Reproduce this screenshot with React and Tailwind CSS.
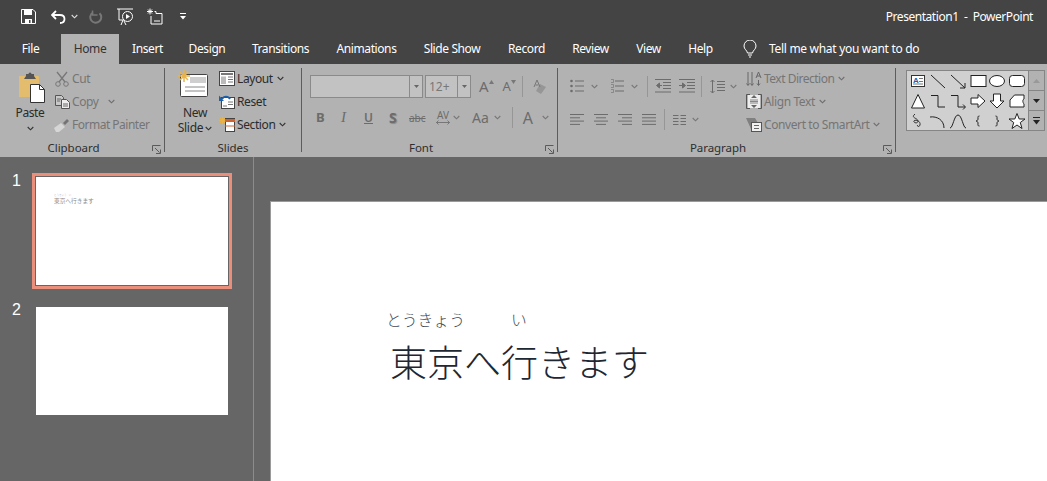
import React from "react";

const Chev = ({ c = "#444", className = "" }) => (
  <svg width="7" height="5" viewBox="0 0 7 5" className={className}>
    <path d="M.7 1 3.500 3.800 6.300 1" fill="none" stroke={c} strokeWidth="1.100" />
  </svg>
);

const Launcher = () => (
  <svg width="9" height="9" viewBox="0 0 9 9" className="absolute right-[3px] top-[5px]">
    <path d="M.5 6V.5h8" fill="none" stroke="#5a5a5a" />
    <path d="M3 3l4.500 4.500M4 8.500h4.500V4.500" fill="none" stroke="#5a5a5a" />
  </svg>
);

const Group = ({ width, label, children, launcher = true }) => (
  <>
    <div className={`flex flex-col ${width}`}>
      <div className="flex h-[76px]">{children}</div>
      <div className={`relative h-[16px] text-center text-[11.5px] leading-[16px] tracking-[-0.05px] text-[#2e2e2e] ${launcher ? "pr-[17px]" : ""}`}>
        {label}
        {launcher && <Launcher />}
      </div>
    </div>
    <div className="mt-[4px] h-[84px] w-px bg-[#5c5c5c]" />
  </>
);

const SmallRow = ({ icon, text, gray, chev, chevClass = "ml-[4px]", track = "tracking-[-0.4px]" }) => (
  <div className="flex h-[23px] items-center">
    <span className="flex w-[18px] justify-center">{icon}</span>
    <span className={`ml-[1px] text-[12px] ${track} ${gray ? "text-[#757575]" : "text-[#2b2b2b]"}`}>{text}</span>
    {chev && <Chev c={gray ? "#6e6e6e" : "#333"} className={chevClass} />}
  </div>
);

const Lines = ({ rows = [0, 1, 2, 3], w = 14, d = "left" }) => (
  <svg width="14" height="13" viewBox="0 0 14 13">
    {rows.map((i) => {
      const short = i % 2 === 1 ? 4 : 0;
      const x1 = d === "left" ? 0 : d === "center" ? short / 2 : d === "right" ? short : 0;
      const x2 = d === "left" ? w - short : d === "center" ? w - short / 2 : w;
      return <path key={i} d={`M${x1} ${1.5 + i * 3.3}H${d === "just" ? w : x2}`} stroke="#6c6c6c" />;
    })}
  </svg>
);

const Bullets = ({ num }) => (
  <svg width="14" height="14" viewBox="0 0 14 14">
    {[2, 7, 12].map((y) => (
      <g key={y}>
        {num ? <path d={`M1 ${y - 1.5}h2.500v3h-2.500`} fill="none" stroke="#777" strokeWidth=".7" /> : <circle cx="1.500" cy={y} r="1.300" fill="#6c6c6c" />}
        <path d={`M5 ${y}h9`} stroke="#6c6c6c" />
      </g>
    ))}
  </svg>
);

const Indent = ({ inc }) => (
  <svg width="16" height="14" viewBox="0 0 16 14">
    <path d="M0 .5h16M8 3.500h8M8 6.500h8M8 9.500h8M0 13h16" stroke="#6c6c6c" />
    {inc ? <path d="M0 6.500h5M3.500 4l3 2.500-3 2.500z" stroke="#6c6c6c" fill="#6c6c6c" /> : <path d="M2 6.500h5M4.500 4l-3 2.500 3 2.500z" stroke="#6c6c6c" fill="#6c6c6c" />}
  </svg>
);

const Sep = ({ className = "h-[21px]" }) => <div className={`w-px bg-[#969696] ${className}`} />;

const shapes = [
  <g key="a"><rect x="3.500" y="4.500" width="13" height="11" fill="#fff" stroke="#333" /><text x="5" y="11.500" fontSize="8" fontWeight="700" fill="#1f5fa8" fontFamily="Liberation Sans">A</text><path d="M11 7.500h4M11 10.500h4M5 13h10" stroke="#777" /></g>,
  <path key="b" d="M3 4 17 17" stroke="#222" fill="none" />,
  <path key="c" d="M3 4 17 17M17 12v5h-5" stroke="#222" fill="none" />,
  <rect key="d" x="3" y="4.500" width="15" height="11" fill="#fff" stroke="#222" />,
  <ellipse key="e" cx="10" cy="10" rx="7.500" ry="5.500" fill="#fff" stroke="#222" />,
  <rect key="f" x="2.500" y="4.500" width="15" height="11" rx="3" fill="#fff" stroke="#222" />,
  <path key="g" d="M10 3.500 16.500 17h-13z" fill="#fff" stroke="#222" />,
  <path key="h" d="M3 4.500h7V16h7" stroke="#222" fill="none" />,
  <path key="i" d="M3 4.500h7V16h7M15 13.500l2.500 2.500-2.500 2.500" stroke="#222" fill="none" />,
  <path key="j" d="M3 7h7V3.500l7 6.500-7 6.500V13H3z" fill="#fff" stroke="#222" />,
  <path key="k" d="M6.500 3h7v7H17l-7 7-7-7h3.500z" fill="#fff" stroke="#222" />,
  <path key="l" d="M3 9 7.500 4H17v4c-2 1-1 4 0 5v3H3z" fill="#fff" stroke="#222" />,
  <path key="m" d="M7 3C2 7 10 7 10 10c0 3-5 2-4 0 1-2 7 0 6 4-.5 2-3 2-2.500 0" stroke="#333" fill="none" />,
  <path key="n" d="M2 6c7-1 14 3 14 11" stroke="#222" fill="none" />,
  <path key="o" d="M2 17C5 17 6 4 10 4s5 13 8 13" stroke="#222" fill="none" />,
  <path key="p" d="M11.500 5c-2 0-1.500 1-1.500 3 0 1-1 2-2 2 1 0 2 1 2 2 0 2-.5 3 1.500 3" stroke="#222" fill="none" />,
  <path key="q" d="M8.500 5c2 0 1.500 1 1.500 3 0 1 1 2 2 2-1 0-2 1-2 2 0 2 .5 3-1.500 3" stroke="#222" fill="none" />,
  <path key="r" d="M10 2.500 12.200 8H18l-4.700 3.500L15 17.500 10 14l-5 3.500 1.700-6L2 8h5.800z" fill="#fff" stroke="#222" />,
];

const tabs = [
  ["File", "w-[61px]"],
  ["Home", "w-[58px]"],
  ["Insert", "w-[57px]"],
  ["Design", "w-[62px]"],
  ["Transitions", "w-[85px]"],
  ["Animations", "w-[87px]"],
  ["Slide Show", "w-[84px]"],
  ["Record", "w-[65px]"],
  ["Review", "w-[63px]"],
  ["View", "w-[53px]"],
  ["Help", "w-[51px]"],
];

const FontTxt = ({ children, className = "" }) => (
  <span className={`leading-none text-[#6c6c6c] ${className}`}>{children}</span>
);

export default function App() {
  return (
    <div className="flex h-[481px] w-[1047px] flex-col overflow-hidden bg-[#666666] font-['Noto_Sans','Liberation_Sans',sans-serif]">
      {/* Title bar */}
      <div className="h-[64px] shrink-0 bg-[#444444]">
        <div className="flex h-[34px] items-center pb-[1px] pl-[21px] text-white">
          <svg width="15" height="15" viewBox="0 0 15 15">
            <path d="M.5.500h11.500l2.500 2.500v11.500H.5z" fill="none" stroke="#fff" />
            <path d="M3 1h8v5H3zM4 10h7v4.500H4z" fill="#fff" />
            <path d="M8 11h1.500v3H8z" fill="#444" />
          </svg>
          <svg width="15" height="14" viewBox="0 0 15 14" className="ml-[15px]">
            <path d="M5 1 1 5l4 4" fill="none" stroke="#fff" strokeWidth="1.800" />
            <path d="M1.500 5H9c6 0 6 8 0 8" fill="none" stroke="#fff" strokeWidth="1.800" />
          </svg>
          <Chev c="#ddd" className="ml-[5px]" />
          <svg width="14" height="14" viewBox="0 0 14 14" className="ml-[11px]">
            <path d="M10.500 3.200A5.500 5.500 0 1 1 4 2.500" fill="none" stroke="#777" strokeWidth="2" />
            <path d="M3.500 .5v4.500H8.500" fill="none" stroke="#777" strokeWidth="1.500" />
          </svg>
          <svg width="17" height="18" viewBox="0 0 17 18" className="ml-[14px]">
            <path d="M0 1h16M2 1v11h5" fill="none" stroke="#fff" />
            <circle cx="10.500" cy="8.500" r="5" fill="none" stroke="#fff" />
            <path d="M9 6v5l4-2.500z" fill="#fff" />
            <path d="M6 12l-2 5M7 13l2 4" stroke="#fff" />
          </svg>
          <svg width="16" height="17" viewBox="0 0 16 17" className="ml-[13px]">
            <path d="M3 .5v6M0 3.500h6M1 1.500l4 4M5 1.500l-4 4" stroke="#fff" />
            <path d="M7.500 3.500H9v2h6V16H4V8" fill="none" stroke="#fff" />
            <path d="M7 13h6" stroke="#fff" />
          </svg>
          <svg width="6" height="7" viewBox="0 0 6 7" className="ml-[17px]">
            <path d="M0 .5h6" stroke="#fff" />
            <path d="M0 3h6L3 6.500z" fill="#fff" />
          </svg>
          <span className="ml-auto mr-[14px] mt-[1px] text-[12px] tracking-[-0.45px] text-white">Presentation1 &nbsp;-&nbsp; PowerPoint</span>
        </div>
        <div className="flex h-[30px] items-center text-[12px] text-white">
          {tabs.map(([t, w]) => (
            <div
              key={t}
              className={`flex h-[30px] items-center justify-center tracking-[-0.4px] ${w} ${t === "Home" ? "bg-[#b2b2b2] text-[#333333]" : ""}`}
            >
              {t}
            </div>
          ))}
          <svg width="14" height="18" viewBox="0 0 14 18" className="ml-[17px]">
            <path d="M4.500 13C4 10 1 9.500 1 6a6 6 0 0 1 12 0c0 3.500-3 4-3.500 7z" fill="none" stroke="#fff" />
            <path d="M5 15h4M6 17h2" stroke="#fff" />
          </svg>
          <span className="ml-[12px] tracking-[-0.3px]">Tell me what you want to do</span>
        </div>
      </div>

      {/* Ribbon */}
      <div className="flex h-[93px] shrink-0 bg-[#b2b2b2]">
        <Group width="w-[164px]" label="Clipboard">
          <div className="ml-[13px] flex w-[34px] flex-col items-center pt-[8px]">
            <svg width="29" height="31" viewBox="0 0 29 31" className="ml-[1px]">
              <path d="M3 4h19a1 1 0 0 1 1 1v20H3z" fill="#e3bd6d" />
              <path d="M10 4V2h2.500a1 1 0 0 1 3 0H18v2l2 3H8z" fill="#555" />
              <path d="M14.500 12.500h9l5 5v13h-14z" fill="#fff" stroke="#333" />
              <path d="M23.500 12.500v5h5" fill="none" stroke="#333" />
            </svg>
            <span className="mt-[1px] text-[12px] leading-[18px] tracking-[-0.4px] text-[#2b2b2b]">Paste</span>
            <Chev c="#333" className="mt-[4px]" />
          </div>
          <div className="ml-[6px] flex flex-col pt-[3px]">
            <SmallRow
              gray
              text="Cut"
              icon={
                <svg width="14" height="16" viewBox="0 0 14 16">
                  <path d="M2 1l8 10M12 1 4 11" stroke="#777" strokeWidth="1.300" />
                  <circle cx="3" cy="13" r="2.300" fill="none" stroke="#777" />
                  <circle cx="11" cy="13" r="2.300" fill="none" stroke="#777" />
                </svg>
              }
            />
            <SmallRow
              gray
              text="Copy"
              chev
              chevClass="ml-[9px]"
              icon={
                <svg width="15" height="14" viewBox="0 0 15 14">
                  <path d="M.5.500h6l2 2v8h-8z" fill="#c8c8c8" stroke="#555" />
                  <path d="M6.500 4.500h5l3 3v6h-8z" fill="#eee" stroke="#555" />
                  <path d="M2 4h4M2 6h3M8 9h5M8 11h5" stroke="#666" />
                </svg>
              }
            />
            <SmallRow
              gray
              text="Format Painter"
              track="tracking-[-0.5px]"
              icon={
                <svg width="16" height="14" viewBox="0 0 16 14">
                  <path d="M0 10 7 5l4 4-6 5H2z" fill="#d6d6d6" />
                  <path d="M9 5l4-4 2 2-4 4z" fill="#747474" />
                </svg>
              }
            />
          </div>
        </Group>

        <Group width="w-[136px]" label="Slides" launcher={false}>
          <div className="ml-[8px] flex w-[44px] flex-col items-center pt-[6px]">
            <svg width="31" height="28" viewBox="0 0 31 28" className="ml-[-3px]">
              <rect x="2.500" y="4.500" width="27" height="22" rx="1" fill="#fff" stroke="#444" />
              <path d="M12 7h16v6H12z" fill="#cfcfcf" />
              <path d="M7 17h20M7 21h20" stroke="#888" />
              <g stroke="#e9b44c" strokeWidth="1.500">
                <path d="M6 0v12M0 6h12M2 2l8 8M10 2l-8 8" />
              </g>
            </svg>
            <span className="mt-[7px] text-[12px] leading-[15px] tracking-[-0.3px] text-[#2b2b2b]">New</span>
            <span className="flex items-center text-[12px] leading-[16px] tracking-[-0.3px] text-[#2b2b2b]">
              Slide
              <Chev c="#333" className="ml-[2px]" />
            </span>
          </div>
          <div className="ml-[1px] flex flex-col pt-[3px]">
            <SmallRow
              text="Layout"
              chev
              icon={
                <svg width="16" height="15" viewBox="0 0 16 15">
                  <rect x=".5" y=".5" width="15" height="14" fill="#fff" stroke="#444" />
                  <path d="M2 3h12" stroke="#777" strokeWidth="2" />
                  <path d="M2 5.500h5V13H2z" fill="#bbb" />
                  <path d="M9 6h5M9 8.500h5M9 11h5" stroke="#777" />
                </svg>
              }
            />
            <SmallRow
              text="Reset"
              icon={
                <svg width="16" height="15" viewBox="0 0 16 15">
                  <rect x="2.500" y="3.500" width="13" height="11" fill="#fff" stroke="#444" />
                  <path d="M9 8h5M9 10.500h5M4 12h4" stroke="#777" />
                  <path d="M3 5a4.500 4.500 0 0 1 8 0" fill="none" stroke="#1f5fa8" strokeWidth="1.800" />
                  <path d="M0 1.500 5 7H0z" fill="#1f5fa8" />
                </svg>
              }
            />
            <SmallRow
              text="Section"
              chev
              icon={
                <svg width="16" height="15" viewBox="0 0 16 15">
                  <path d="M3.500 0v7M0 3.500h7M1 1l5 5M6 1 1 6" stroke="#e9b44c" />
                  <rect x="6.500" y="1.500" width="9" height="13" fill="#fff" stroke="#444" />
                  <path d="M6 2h10v3H6z" fill="#d0622d" />
                  <path d="M6 9h10" stroke="#d0622d" />
                </svg>
              }
            />
          </div>
        </Group>

        <Group width="w-[255px]" label="Font">
          <div className="flex flex-col pl-[8px] pt-[11px]">
            <div className="flex h-[23px] items-center">
              <div className="flex h-[23px] w-[113px] border border-[#8a8a8a] bg-[#c2c2c2]">
                <div className="flex-1" />
                <div className="flex w-[13px] items-center justify-center border-l border-[#8a8a8a]">
                  <svg width="5" height="3" viewBox="0 0 5 3"><path d="M0 0h5L2.500 3z" fill="#666" /></svg>
                </div>
              </div>
              <div className="ml-[2px] flex h-[23px] w-[46px] border border-[#8a8a8a] bg-[#c2c2c2]">
                <span className="flex-1 pl-[3px] text-[12px] leading-[21px] text-[#787878]">12+</span>
                <div className="flex w-[13px] items-center justify-center border-l border-[#8a8a8a]">
                  <svg width="5" height="3" viewBox="0 0 5 3"><path d="M0 0h5L2.500 3z" fill="#666" /></svg>
                </div>
              </div>
              <FontTxt className="ml-[8px] text-[15px]">A</FontTxt>
              <svg width="5" height="4" viewBox="0 0 5 4" className="mb-[9px]"><path d="M0 4h5L2.500 0z" fill="#777" /></svg>
              <FontTxt className="ml-[9px] text-[13px]">A</FontTxt>
              <svg width="5" height="4" viewBox="0 0 5 4" className="mb-[9px]"><path d="M0 0h5L2.500 4z" fill="#777" /></svg>
              <Sep className="ml-[6px] h-[21px]" />
              <div className="ml-[9px] flex h-[16px] w-[15px]">
                <svg width="15" height="16" viewBox="0 0 15 16">
                  <path d="M8 5l6 3-5 7-5-3z" fill="#969696" />
                  <path d="M2 8 5 1l3 7M3.500 6h3" fill="none" stroke="#777" />
                </svg>
              </div>
            </div>
            <div className="mt-[9px] flex h-[21px] items-center">
              <FontTxt className="ml-[6px] w-[25px] text-[13px] font-bold">B</FontTxt>
              <FontTxt className="w-[23px] font-['Liberation_Serif'] text-[15px] italic">I</FontTxt>
              <FontTxt className="w-[25px] text-[12px] font-semibold underline">U</FontTxt>
              <FontTxt className="w-[20px] text-[14px] font-bold [text-shadow:1px_1px_1px_#8a8a8a]">S</FontTxt>
              <FontTxt className="w-[24px] text-[10px] line-through">abc</FontTxt>
              <div className="flex w-[20px] flex-col items-center">
                <FontTxt className="text-[10px] leading-[10px]">AV</FontTxt>
                <svg width="16" height="5" viewBox="0 0 16 5"><path d="M1 2.500h14M3.500.5l-2 2 2 2M12.500.5l2 2-2 2" fill="none" stroke="#777" /></svg>
              </div>
              <Chev c="#777" />
              <FontTxt className="ml-[12px] text-[14px]">Aa</FontTxt>
              <Chev c="#777" className="ml-[5px]" />
              <Sep className="ml-[11px] h-[21px]" />
              <FontTxt className="ml-[10px] text-[16px]">A</FontTxt>
              <Chev c="#777" className="ml-[9px]" />
            </div>
          </div>
        </Group>

        <Group width="w-[337px]" label="Paragraph">
          <div className="flex w-[187px] flex-col pl-[12px] pt-[14px]">
            <div className="flex h-[16px] items-center">
              <Bullets />
              <Chev c="#777" className="ml-[7px]" />
              <span className="ml-[12px] flex"><Bullets num /></span>
              <Chev c="#777" className="ml-[7px]" />
              <Sep className="ml-[9px] h-[21px]" />
              <span className="ml-[7px] flex"><Indent /></span>
              <span className="ml-[8px] flex"><Indent inc /></span>
              <Sep className="ml-[6px] h-[21px]" />
              <svg width="15" height="15" viewBox="0 0 15 15" className="ml-[8px]">
                <path d="M2.500 1v13M.5 3l2-2 2 2M.5 12l2 2 2-2" fill="none" stroke="#6c6c6c" />
                <path d="M7 2.500h8M7 5.500h8M7 8.500h8M7 11.500h8" stroke="#6c6c6c" />
              </svg>
              <Chev c="#777" className="ml-[5px]" />
            </div>
            <div className="mt-[15px] flex h-[21px] items-center">
              <Lines d="left" />
              <span className="ml-[10px] flex"><Lines d="center" /></span>
              <span className="ml-[10px] flex"><Lines d="right" /></span>
              <span className="ml-[10px] flex"><Lines d="just" /></span>
              <Sep className="ml-[8px] h-[21px]" />
              <svg width="13" height="12" viewBox="0 0 13 12" className="ml-[8px]">
                <path d="M0 1.500h5.500M0 4.500h5.500M0 7.500h5.500M0 10.500h5.500M7.500 1.500H13M7.500 4.500H13M7.500 7.500H13M7.500 10.500H13" stroke="#6c6c6c" />
              </svg>
              <Chev c="#777" className="ml-[6px]" />
            </div>
          </div>
          <div className="flex flex-col pt-[3px]">
            <SmallRow
              gray
              text="Text Direction"
              chev
              track="tracking-[-0.5px]"
              icon={
                <svg width="16" height="16" viewBox="0 0 16 16">
                  <path d="M2 1v13M.5 12.500l1.500 2 1.500-2M6 1v13M4.500 12.500l1.500 2 1.500-2" fill="none" stroke="#666" />
                  <path d="M10 7l2.500-6L15 7M11 5h3" fill="none" stroke="#666" />
                  <path d="M12.500 9v5M11 12.500l1.500 2 1.500-2" fill="none" stroke="#666" />
                </svg>
              }
            />
            <SmallRow
              gray
              text="Align Text"
              chev
              icon={
                <svg width="16" height="15" viewBox="0 0 16 15">
                  <rect x="2" y="1" width="12" height="13" fill="#ededed" />
                  <path d="M4 .5H.5v14H4M12 .5h3.500v14H12" fill="none" stroke="#555" />
                  <path d="M8 1l-3 3h6zM8 14l-3-3h6z" fill="#666" />
                  <path d="M4 6h8M4 7.500h8M4 9h8" stroke="#888" />
                </svg>
              }
            />
            <SmallRow
              gray
              text="Convert to SmartArt"
              chev
              icon={
                <svg width="16" height="15" viewBox="0 0 16 15">
                  <path d="M0 1h9l3 5H5v6z" fill="#808080" />
                  <rect x="5.500" y="5.500" width="10" height="9" fill="#f0f0f0" stroke="#555" />
                  <path d="M8 8.500h5M8 11.500h5" stroke="#666" />
                </svg>
              }
            />
          </div>
        </Group>

        <div className="flex flex-1 items-start pl-[10px] pt-[6px]">
          <div className="grid h-[61px] w-[123px] grid-cols-6 content-center border border-[#858585] bg-[#d0d0d0] px-[1px]">
            {shapes.map((s, i) => (
              <svg key={i} width="20" height="20" viewBox="0 0 20 20">
                {s}
              </svg>
            ))}
          </div>
          <div className="flex h-[61px] w-[16px] flex-col border border-l-0 border-[#858585] bg-[#b2b2b2]">
            <div className="flex h-[20px] items-center justify-center border-b border-[#858585]">
              <svg width="7" height="4" viewBox="0 0 7 4"><path d="M0 4h7L3.500 0z" fill="#999" /></svg>
            </div>
            <div className="flex h-[20px] items-center justify-center border-b border-[#858585]">
              <svg width="7" height="4" viewBox="0 0 7 4"><path d="M0 0h7L3.500 4z" fill="#222" /></svg>
            </div>
            <div className="flex flex-1 items-center justify-center">
              <svg width="7" height="8" viewBox="0 0 7 8"><path d="M0 .5h7" stroke="#222" /><path d="M0 3h7L3.500 7.500z" fill="#222" /></svg>
            </div>
          </div>
        </div>
      </div>

      {/* Main area */}
      <div className="flex min-h-0 flex-1">
        <div className="flex h-full w-[254px] shrink-0 flex-col border-r border-[#8c8c8c] pl-[12px] pt-[16px] font-['Liberation_Sans']">
          <div className="flex items-start">
            <span className="w-[20px] text-[16px] leading-[16px] text-white">1</span>
            <div className="flex h-[116px] w-[200px] border-[3px] border-[#e98f7c]">
              <div className="flex-1 border border-[#666666] bg-white pl-[18px] pt-[17px] font-['Noto_Sans_CJK_JP'] text-[5.7px] leading-[8px] text-[#8a8a8a]">
                <div className="h-[3px] text-[2.5px] leading-[3px] text-[#b9b9d0]">とうきょう &nbsp; &nbsp;い</div>
                東京へ行きます
              </div>
            </div>
          </div>
          <div className="mt-[18px] flex items-start">
            <span className="mt-[-5px] w-[24px] text-[16px] leading-[16px] text-white">2</span>
            <div className="h-[108px] w-[192px] bg-white" />
          </div>
        </div>
        <div className="min-w-0 flex-1 pl-[16px] pt-[44px]">
          <div className="h-full border-l border-t border-[#9a9a9a] bg-white pl-[117px] pt-[108px] font-['Noto_Sans_CJK_JP'] font-light text-[#1f2733]">
            <div className="ml-[-2px] flex text-[15.8px] leading-[20px] text-[#444a55]">
              <span className="w-[125px]">とうきょう</span>
              <span>い</span>
            </div>
            <div className="ml-[2px] mt-[5px] text-[37px] leading-[52px]">東京へ行きます</div>
          </div>
        </div>
      </div>
    </div>
  );
}
